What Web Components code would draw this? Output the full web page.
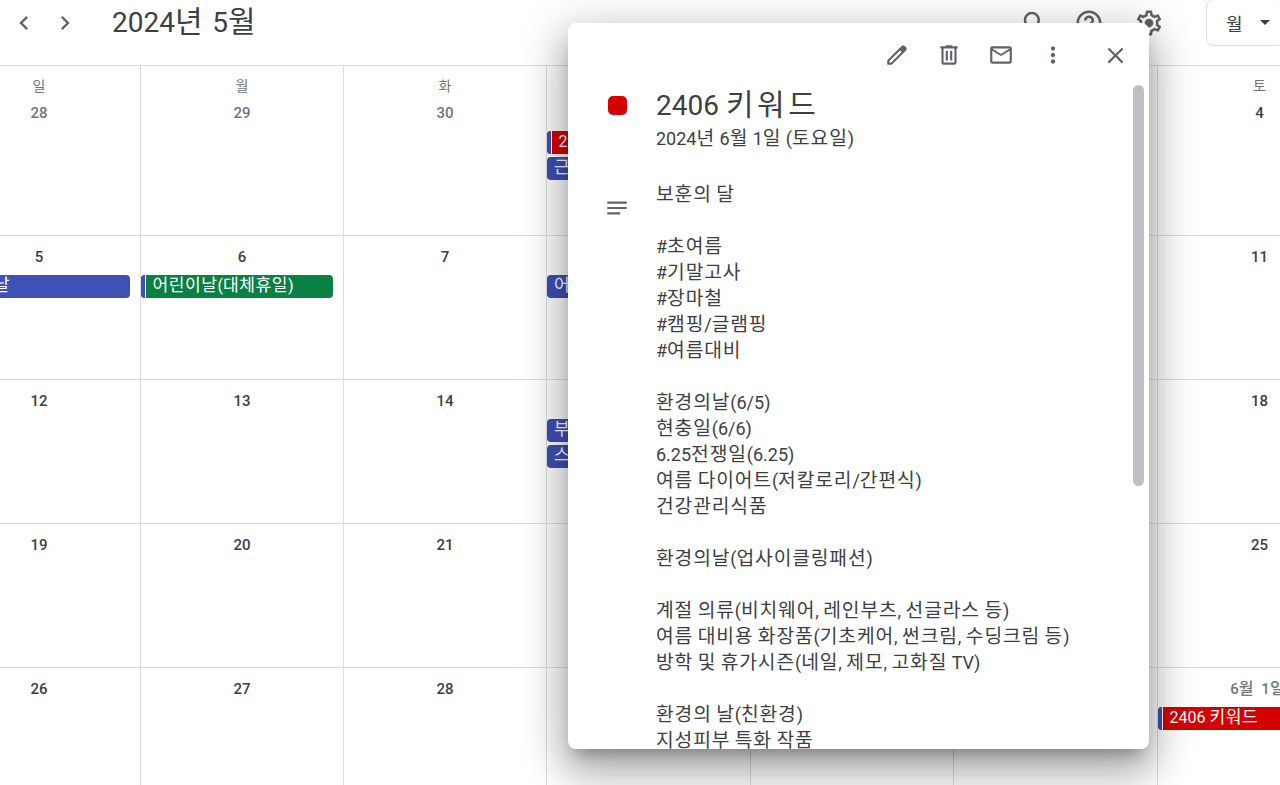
<!DOCTYPE html>
<html lang="ko">
<head>
<meta charset="utf-8">
<title>2024년 5월</title>
<style>
  html, body { margin: 0; height: 785px; overflow: hidden; background: #fff; }
  body { font-family: Roboto, "Noto Sans CJK KR", sans-serif; color: #3c4043; position: relative; }
</style>
</head>
<body>
<cal-toolbar title-text="2024년 5월" view="월"></cal-toolbar>

<cal-month>
  <cal-day weekday="일" date="28" muted></cal-day>
  <cal-day weekday="월" date="29" muted></cal-day>
  <cal-day weekday="화" date="30" muted></cal-day>
  <cal-day weekday="" date=""><cal-event color="#d50000" stripe>2</cal-event><cal-event>근</cal-event></cal-day>
  <cal-day weekday="" date=""></cal-day>
  <cal-day weekday="" date=""></cal-day>
  <cal-day weekday="토" date="4"></cal-day>

  <cal-day date="5"><cal-event>어린이날</cal-event></cal-day>
  <cal-day date="6"><cal-event color="#0b8043" stripe>어린이날(대체휴일)</cal-event></cal-day>
  <cal-day date="7"></cal-day>
  <cal-day date=""><cal-event>어</cal-event></cal-day>
  <cal-day date=""></cal-day>
  <cal-day date=""></cal-day>
  <cal-day date="11"></cal-day>

  <cal-day date="12"></cal-day>
  <cal-day date="13"></cal-day>
  <cal-day date="14"></cal-day>
  <cal-day date=""><cal-event>부</cal-event><cal-event>스</cal-event></cal-day>
  <cal-day date=""></cal-day>
  <cal-day date=""></cal-day>
  <cal-day date="18"></cal-day>

  <cal-day date="19"></cal-day>
  <cal-day date="20"></cal-day>
  <cal-day date="21"></cal-day>
  <cal-day date=""></cal-day>
  <cal-day date=""></cal-day>
  <cal-day date=""></cal-day>
  <cal-day date="25"></cal-day>

  <cal-day date="26"></cal-day>
  <cal-day date="27"></cal-day>
  <cal-day date="28"></cal-day>
  <cal-day date=""></cal-day>
  <cal-day date=""></cal-day>
  <cal-day date=""></cal-day>
  <cal-day date="6월 1일" muted><cal-event color="#d50000" stripe>2406 키워드</cal-event></cal-day>
</cal-month>

<event-popup title-text="2406 키워드" date-text="2024년 6월 1일 (토요일)">보훈의 달

#초여름
#기말고사
#장마철
#캠핑/글램핑
#여름대비

환경의날(6/5)
현충일(6/6)
6.25전쟁일(6.25)
여름 다이어트(저칼로리/간편식)
건강관리식품

환경의날(업사이클링패션)

계절 의류(비치웨어, 레인부츠, 선글라스 등)
여름 대비용 화장품(기초케어, 썬크림, 수딩크림 등)
방학 및 휴가시즌(네일, 제모, 고화질 TV)

환경의 날(친환경)
지성피부 특화 작품</event-popup>

<script>
const ICONS = {
  left: 'M15.41 7.41 14 6l-6 6 6 6 1.41-1.41L10.83 12z',
  right: 'M10 6 8.59 7.41 13.17 12l-4.58 4.59L10 18l6-6z',
  search: 'M15.5 14h-.79l-.28-.27A6.471 6.471 0 0 0 16 9.5 6.5 6.5 0 1 0 9.5 16c1.61 0 3.09-.59 4.23-1.57l.27.28v.79l5 4.99L20.49 19l-4.99-5zm-6 0C7.01 14 5 11.99 5 9.5S7.01 5 9.5 5 14 7.01 14 9.5 11.99 14 9.5 14z',
  help: 'M11 18h2v-2h-2v2zm1-16C6.48 2 2 6.48 2 12s4.48 10 10 10 10-4.48 10-10S17.52 2 12 2zm0 18c-4.41 0-8-3.59-8-8s3.59-8 8-8 8 3.59 8 8-3.59 8-8 8zm0-14c-2.21 0-4 1.79-4 4h2c0-1.1.9-2 2-2s2 .9 2 2c0 2-3 1.75-3 5h2c0-2.25 3-2.5 3-5 0-2.21-1.79-4-4-4z',
  gear: 'M19.43 12.98c.04-.32.07-.64.07-.98 0-.34-.03-.66-.07-.98l2.11-1.65c.19-.15.24-.42.12-.64l-2-3.46c-.09-.16-.26-.25-.44-.25-.06 0-.12.01-.17.03l-2.49 1c-.52-.4-1.08-.73-1.69-.98l-.38-2.65C14.46 2.18 14.25 2 14 2h-4c-.25 0-.46.18-.49.42l-.38 2.65c-.61.25-1.17.59-1.69.98l-2.49-1c-.06-.02-.12-.03-.18-.03-.17 0-.34.09-.43.25l-2 3.46c-.13.22-.07.49.12.64l2.11 1.65c-.04.32-.07.65-.07.98 0 .33.03.66.07.98l-2.11 1.65c-.19.15-.24.42-.12.64l2 3.46c.09.16.26.25.44.25.06 0 .12-.01.17-.03l2.49-1c.52.4 1.08.73 1.69.98l.38 2.65c.03.24.24.42.49.42h4c.25 0 .46-.18.49-.42l.38-2.65c.61-.25 1.17-.59 1.69-.98l2.49 1c.06.02.12.03.18.03.17 0 .34-.09.43-.25l2-3.46c.12-.22.07-.49-.12-.64l-2.11-1.65zm-1.98-1.71c.04.31.05.52.05.73 0 .21-.02.43-.05.73l-.14 1.13.89.7 1.08.84-.7 1.21-1.27-.51-1.04-.42-.9.68c-.43.32-.84.56-1.25.73l-1.06.43-.16 1.13-.2 1.35h-1.4l-.19-1.35-.16-1.13-1.06-.43c-.43-.18-.83-.41-1.23-.71l-.91-.7-1.06.43-1.27.51-.7-1.21 1.08-.84.89-.7-.14-1.13c-.03-.31-.05-.54-.05-.74s.02-.43.05-.73l.14-1.13-.89-.7-1.08-.84.7-1.21 1.27.51 1.04.42.9-.68c.43-.32.84-.56 1.25-.73l1.06-.43.16-1.13.2-1.35h1.39l.19 1.35.16 1.13 1.06.43c.43.18.83.41 1.23.71l.91.7 1.06-.43 1.27-.51.7 1.21-1.07.85-.89.7.14 1.13zM12 8.5a3.5 3.5 0 1 0 0 7 3.5 3.5 0 0 0 0-7z',
  edit: 'M20.41 4.94l-1.35-1.35c-.78-.78-2.05-.78-2.83 0L3 16.82V21h4.18L20.41 7.77c.79-.78.79-2.05 0-2.83zm-14 14.12L5 19v-1.36l9.82-9.82 1.41 1.41-9.82 9.83z',
  trash: 'M15 4V3H9v1H4v2h1v13c0 1.1.9 2 2 2h10c1.1 0 2-.9 2-2V6h1V4h-5zm2 15H7V6h10v13zM9 8h2v9H9zm4 0h2v9h-2z',
  mail: 'M22 6c0-1.1-.9-2-2-2H4c-1.1 0-2 .9-2 2v12c0 1.1.9 2 2 2h16c1.1 0 2-.9 2-2V6zm-2 0l-8 5-8-5h16zm0 12H4V8l8 5 8-5v10z',
  more: 'M12 8c1.1 0 2-.9 2-2s-.9-2-2-2-2 .9-2 2 .9 2 2 2zm0 2c-1.1 0-2 .9-2 2s.9 2 2 2 2-.9 2-2-.9-2-2-2zm0 6c-1.1 0-2 .9-2 2s.9 2 2 2 2-.9 2-2-.9-2-2-2z',
  close: 'M19 6.41 17.59 5 12 10.59 6.41 5 5 6.41 10.59 12 5 17.59 6.41 19 12 13.41 17.59 19 19 17.59 13.41 12z',
  notes: 'M3 18h12v-2H3v2zM3 6v2h18V6H3zm0 7h18v-2H3v2z'
};

// hangul in the installed font runs narrower than in the reference, so those runs get a bit bigger and spaced
function spaced(text) {
  return text.replace(/[가-힣]+/g, m => `<span style="font-size:1.07em;letter-spacing:var(--ko,.045em)">${m}</span>`);
}

class UiIcon extends HTMLElement {
  connectedCallback() {
    const size = this.getAttribute('size') || 24;
    this.attachShadow({ mode: 'open' }).innerHTML = `
      <style>
        :host { display: flex; align-items: center; justify-content: center; flex: none; color: #5f6368; }
        svg { display: block; fill: currentColor; }
      </style>
      <svg width="${size}" height="${size}" viewBox="0 0 24 24"><path d="${ICONS[this.getAttribute('name')]}"/></svg>`;
  }
}

class CalToolbar extends HTMLElement {
  connectedCallback() {
    this.attachShadow({ mode: 'open' }).innerHTML = `
      <style>
        :host { display: flex; align-items: flex-start; height: 65px; padding-left: 3px; box-sizing: border-box; overflow: hidden; }
        .nav { width: 41px; height: 46px; }
        h1 { margin: 0 0 0 27px; font-size: 28px; font-weight: 400; line-height: 44px; color: #3c4043; white-space: nowrap; --ko: .09em; }
        .tools { display: flex; margin-left: auto; }
        .tools ui-icon { height: 46px; }
        .search { margin-right: 24px; }
        .help { margin-right: 30px; }
        .view { display: flex; align-items: center; box-sizing: border-box; width: 80px; height: 47px; margin: -1px -6px 0 42px; padding-left: 19px; border: 1px solid #dadce0; border-radius: 8px; font-size: 18px; color: #3c4043; }
        .caret { margin-left: 17px; border: 5px solid transparent; border-top-color: #3c4043; border-bottom: 0; }
      </style>
      <ui-icon class="nav" name="left" size="28"></ui-icon>
      <ui-icon class="nav" name="right" size="28"></ui-icon>
      <h1>${spaced(this.getAttribute('title-text'))}</h1>
      <div class="tools">
        <ui-icon class="search" name="search" size="30"></ui-icon>
        <ui-icon class="help" name="help" size="30"></ui-icon>
        <ui-icon name="gear" size="30"></ui-icon>
      </div>
      <div class="view">${this.getAttribute('view')}<span class="caret"></span></div>`;
  }
}

class CalMonth extends HTMLElement {
  connectedCallback() {
    this.attachShadow({ mode: 'open' }).innerHTML = `
      <style>
        :host { display: block; overflow: hidden; height: 720px; border-top: 1px solid #dadce0; box-sizing: content-box; }
        .grid { display: grid; margin-left: -62px; width: 1424px;
          grid-template-columns: 203px 203px 203px 204px 203px 204px 204px;
          grid-template-rows: 170px repeat(4, 144px); }
      </style>
      <div class="grid"><slot></slot></div>`;
  }
}

class CalDay extends HTMLElement {
  connectedCallback() {
    const muted = this.hasAttribute('muted');
    this.attachShadow({ mode: 'open' }).innerHTML = `
      <style>
        :host { display: block; box-sizing: border-box; min-width: 0; border-right: 1px solid #dadce0; border-bottom: 1px solid #dadce0; overflow: hidden; }
        .weekday { height: 26px; line-height: 40px; text-align: center; font-size: 14px; color: #70757a; }
        .date { height: 39px; line-height: 42px; text-align: center; font-size: 15px; font-weight: 500; color: ${muted ? '#70757a' : '#3c4043'}; white-space: nowrap; --ko: .25em; }
        .events { padding-right: 10px; }
      </style>
      ${this.hasAttribute('weekday') ? `<div class="weekday">${this.getAttribute('weekday')}</div>` : ''}
      <div class="date">${spaced(this.getAttribute('date'))}</div>
      <div class="events"><slot></slot></div>`;
  }
}

class CalEvent extends HTMLElement {
  connectedCallback() {
    const color = this.getAttribute('color') || '#3f51b5';
    const stripe = this.hasAttribute('stripe');
    const label = this.textContent;
    this.textContent = '';
    this.attachShadow({ mode: 'open' }).innerHTML = `
      <style>
        :host { display: flex; height: 23px; margin-bottom: 3px; border-radius: 4px; overflow: hidden; background: ${color}; color: #fff; font-size: 16px; line-height: 21px; white-space: nowrap; --ko: .03em; }
        .stripe { flex: none; width: 4px; background: #3f51b5; border-right: 1px solid #fff; }
        .text { padding-left: ${stripe ? '6.5px' : '7px'}; }
      </style>
      ${stripe ? '<span class="stripe"></span>' : ''}
      <span class="text">${spaced(label)}</span>`;
  }
}

class EventPopup extends HTMLElement {
  connectedCallback() {
    const body = this.textContent;
    this.textContent = '';
    this.attachShadow({ mode: 'open' }).innerHTML = `
      <style>
        :host { position: absolute; left: 568px; top: 23px; width: 581px; height: 726px; background: #fff; border-radius: 8px; z-index: 2;
          color: #3c4043; display: block;
          box-shadow: 0 24px 38px 3px rgba(0,0,0,.2), 0 9px 46px 8px rgba(0,0,0,.18), 0 11px 15px -7px rgba(0,0,0,.28); }
        .clip { height: 100%; border-radius: 8px; overflow: hidden; }
        .actions { display: flex; justify-content: flex-end; height: 64px; padding-right: 8px; }
        .actions ui-icon { width: 52px; }
        .actions .close { margin-left: 10px; }
        .head { display: grid; grid-template-columns: 88px 1fr; }
        .dot { width: 19px; height: 19px; margin: 9px 0 0 40px; border-radius: 5px; background: #d50000; }
        h2 { margin: 0; font-size: 28px; font-weight: 400; line-height: 34px; white-space: nowrap; padding-top: 1px; --ko: .12em; }
        .date { font-size: 18px; line-height: 26px; margin-top: 3px; }
        .body { display: grid; grid-template-columns: 88px 1fr; margin-top: 30px; }
        .notes-wrap { padding-top: 13px; }
        .notes { justify-content: flex-start; padding-left: 36px; height: 26px; }
        .text { white-space: pre-line; font-size: 18px; line-height: 26px; }
        .scroll { position: absolute; left: 565px; top: 62px; width: 11px; height: 401px; border-radius: 6px; background: #bdc1c6; }
      </style>
      <div class="clip">
        <div class="actions">
          <ui-icon name="edit" size="26"></ui-icon>
          <ui-icon name="trash" size="26"></ui-icon>
          <ui-icon name="mail" size="26"></ui-icon>
          <ui-icon name="more" size="26"></ui-icon>
          <ui-icon class="close" name="close" size="27"></ui-icon>
        </div>
        <div class="head">
          <div class="dot"></div>
          <div>
            <h2>${spaced(this.getAttribute('title-text'))}</h2>
            <div class="date">${spaced(this.getAttribute('date-text'))}</div>
          </div>
        </div>
        <div class="body">
          <div class="notes-wrap"><ui-icon class="notes" name="notes" size="26"></ui-icon></div>
          <div class="text">${spaced(body)}</div>
        </div>
      </div>
      <div class="scroll"></div>`;
  }
}

customElements.define('ui-icon', UiIcon);
customElements.define('cal-toolbar', CalToolbar);
customElements.define('cal-month', CalMonth);
customElements.define('cal-day', CalDay);
customElements.define('cal-event', CalEvent);
customElements.define('event-popup', EventPopup);
</script>
</body>
</html>
